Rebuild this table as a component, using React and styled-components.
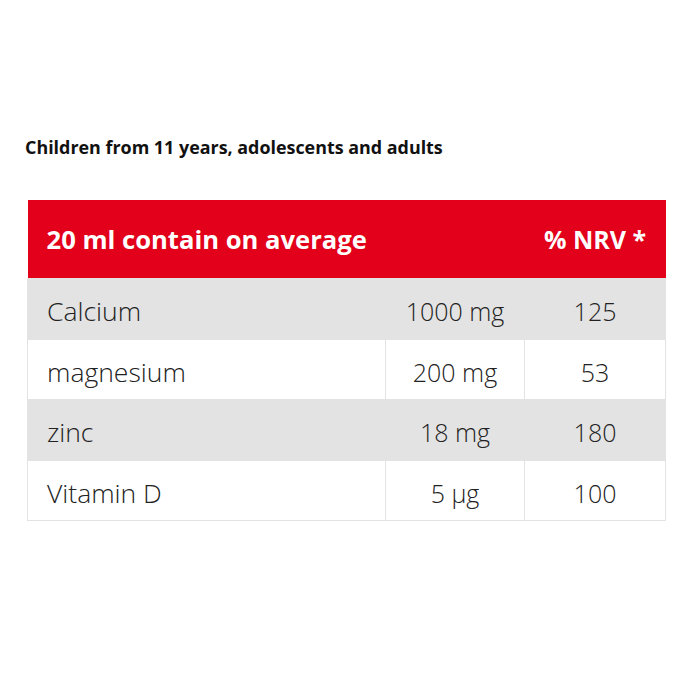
import React from "react";
import styled, { createGlobalStyle } from "styled-components";

const GlobalStyle = createGlobalStyle`
  body {
    margin: 0;
    background: #fff;
    font-family: "Open Sans", "Liberation Sans", sans-serif;
  }
`;

const Page = styled.div`
  width: 700px;
  height: 700px;
  box-sizing: border-box;
  padding: 136px 35px 0 27px;
`;

const Title = styled.h3`
  margin: 0 0 0 -2px;
  font-size: 17.9px;
  font-weight: 700;
  color: #111;
  line-height: 22px;
`;

const Table = styled.table`
  margin-top: 42px;
  width: 638px;
  border-collapse: collapse;
  table-layout: fixed;
`;

const HeadCell = styled.th`
  background: #e2001a;
  color: #fff;
  font-size: ${(p) => (p.center ? "25px" : "25.6px")};
  font-weight: 700;
  height: 78px;
  padding: 0;
  text-align: ${(p) => (p.center ? "center" : "left")};
  padding-left: ${(p) => (p.center ? "0" : "19px")};
`;

const Row = styled.tr`
  background: ${(p) => (p.shaded ? "#e3e3e3" : "#fff")};
`;

const Cell = styled.td`
  height: 60.5px;
  box-sizing: border-box;
  padding: 5px 0 0;
  padding-left: ${(p) => (p.center ? "0" : "19px")};
  border: 1px solid #e3e3e3;
  font-size: ${(p) => (p.center ? "25px" : "26.5px")};
  font-weight: 300;
  color: #222;
  text-align: ${(p) => (p.center ? "center" : "left")};
`;

const rows = [
  ["Calcium", "1000 mg", "125"],
  ["magnesium", "200 mg", "53"],
  ["zinc", "18 mg", "180"],
  ["Vitamin D", "5 µg", "100"],
];

export default function App() {
  return (
    <Page>
      <GlobalStyle />
      <Title>Children from 11 years, adolescents and adults</Title>
      <Table>
        <colgroup>
          <col style={{ width: 358 }} />
          <col style={{ width: 139 }} />
          <col style={{ width: 141 }} />
        </colgroup>
        <thead>
          <tr>
            <HeadCell colSpan={2}>20 ml contain on average</HeadCell>
            <HeadCell center>% NRV *</HeadCell>
          </tr>
        </thead>
        <tbody>
          {rows.map(([name, amount, nrv], i) => (
            <Row key={name} shaded={i % 2 === 0}>
              <Cell>{name}</Cell>
              <Cell center>{amount}</Cell>
              <Cell center>{nrv}</Cell>
            </Row>
          ))}
        </tbody>
      </Table>
    </Page>
  );
}
